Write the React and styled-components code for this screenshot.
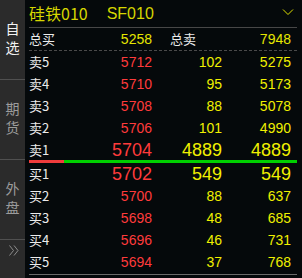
import React from "react";
import styled, { createGlobalStyle } from "styled-components";

const GlobalStyle = createGlobalStyle`
  html, body {
    margin: 0;
    padding: 0;
    background: #05090b;
  }
  body {
    font-family: "Liberation Sans", "Noto Sans CJK SC", sans-serif;
  }
`;

const asks = [
  { label: "卖5", price: 5712, vol: 102, total: 5275 },
  { label: "卖4", price: 5710, vol: 95, total: 5173 },
  { label: "卖3", price: 5708, vol: 88, total: 5078 },
  { label: "卖2", price: 5706, vol: 101, total: 4990 },
  { label: "卖1", price: 5704, vol: 4889, total: 4889, big: true },
];

const bids = [
  { label: "买1", price: 5702, vol: 549, total: 549, big: true },
  { label: "买2", price: 5700, vol: 88, total: 637 },
  { label: "买3", price: 5698, vol: 48, total: 685 },
  { label: "买4", price: 5696, vol: 46, total: 731 },
  { label: "买5", price: 5694, vol: 37, total: 768 },
];

const App = () => (
  <>
    <GlobalStyle />
    <Screen>
      <Sidebar>
        <SideTab $active>
          <span>自</span>
          <span>选</span>
        </SideTab>
        <SideTab>
          <span>期</span>
          <span>货</span>
        </SideTab>
        <SideTab>
          <span>外</span>
          <span>盘</span>
        </SideTab>
        <MoreTab>
          <svg width="10" height="11" viewBox="0 0 10 11">
            <path
              d="M0.5 0.5 L4.5 5.5 L0.5 10.5 M5 0.5 L9 5.5 L5 10.5"
              fill="none"
              stroke="#8c8c8c"
              strokeWidth="1"
            />
          </svg>
        </MoreTab>
      </Sidebar>
      <Main>
        <Header>
          <Title>硅铁010</Title>
          <Code>SF010</Code>
          <Chevron width="12" height="8" viewBox="0 0 12 8">
            <path d="M1 1.5 L6 6.5 L11 1.5" fill="none" stroke="#e0e000" strokeWidth="1" />
          </Chevron>
        </Header>
        <TotalRow>
          <Label>总买</Label>
          <Num $color="#e6e600">5258</Num>
          <SubLabel>总卖</SubLabel>
          <Num $color="#e6e600">7948</Num>
        </TotalRow>
        {asks.map((r) => (
          <BookRow key={r.label} $big={r.big}>
            <Label>{r.label}</Label>
            <Num $color="#ff3b3b">{r.price}</Num>
            <Num $color="#f0f000">{r.vol}</Num>
            <Num $color="#f0f000">{r.total}</Num>
          </BookRow>
        ))}
        <RatioBar>
          <BarPart $color="#f03c3c" style={{ width: "13%" }} />
          <BarPart $color="#00d000" style={{ flex: 1 }} />
        </RatioBar>
        {bids.map((r) => (
          <BookRow key={r.label} $big={r.big}>
            <Label>{r.label}</Label>
            <Num $color="#ff3b3b">{r.price}</Num>
            <Num $color="#f0f000">{r.vol}</Num>
            <Num $color="#f0f000">{r.total}</Num>
          </BookRow>
        ))}
        <BottomRule />
      </Main>
    </Screen>
  </>
);

export default App;

const Screen = styled.div`
  display: flex;
  width: 302px;
  height: 278px;
  overflow: hidden;
  background: #05090b;
`;

const Sidebar = styled.div`
  width: 25px;
  flex-shrink: 0;
  background: #2b2b2b;
  display: flex;
  flex-direction: column;
`;

const SideTab = styled.div`
  height: 80px;
  border-bottom: 1px solid #505050;
  display: flex;
  flex-direction: column;
  align-items: center;
  justify-content: center;
  font-family: "Noto Sans CJK SC", sans-serif;
  font-size: 14px;
  line-height: 19px;
  color: ${(p) => (p.$active ? "#f2f2f2" : "#9c9c9c")};
  padding-bottom: 4px;
  box-sizing: border-box;
`;

const MoreTab = styled.div`
  flex: 1;
  display: flex;
  justify-content: center;
  padding-top: 5px;
  padding-left: 3px;
`;

const Main = styled.div`
  flex: 1;
  padding: 0 5px 0 4px;
  display: flex;
  flex-direction: column;
`;

const Header = styled.div`
  height: 27px;
  border-bottom: 1px solid #474747;
  display: flex;
  align-items: center;
  color: #d6d600;
  font-size: 16px;
`;

const Title = styled.span`
  font-family: "Noto Sans CJK SC", sans-serif;
  margin-top: -1px;
`;

const Code = styled.span`
  margin-left: 19px;
  font-family: "Liberation Sans", sans-serif;
`;

const Chevron = styled.svg`
  margin-left: auto;
  margin-right: 3px;
  margin-top: -3px;
`;

const Grid = styled.div`
  display: grid;
  grid-template-columns: 40px 83px 70px 69px;
  align-items: center;
`;

const TotalRow = styled(Grid)`
  height: 22px;
  border-bottom: 1px dashed #4a4a4a;
  font-size: 14px;
`;

const BookRow = styled(Grid)`
  height: 22px;
  font-size: ${(p) => (p.$big ? "18px" : "14px")};
`;

const Label = styled.span`
  font-family: "Noto Sans CJK SC", sans-serif;
  font-size: 13px;
  color: #ececec;
  line-height: 16px;
`;

const SubLabel = styled(Label)`
  padding-left: 18px;
`;

const Num = styled.span`
  text-align: right;
  color: ${(p) => p.$color};
  font-family: "Liberation Sans", sans-serif;
`;

const RatioBar = styled.div`
  display: flex;
  height: 3px;
  margin-top: -1px;
`;

const BarPart = styled.div`
  background: ${(p) => p.$color};
`;

const BottomRule = styled.div`
  border-top: 1px solid #6a6a6a;
  margin-top: 1px;
`;
